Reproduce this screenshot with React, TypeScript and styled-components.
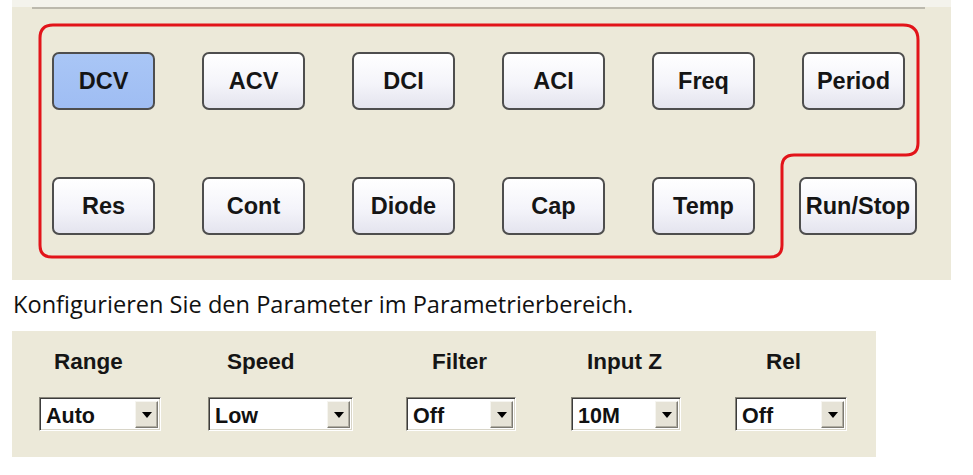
import React from "react";
import styled, { createGlobalStyle } from "styled-components";

const Global = createGlobalStyle`
  html, body { margin: 0; padding: 0; background: #ffffff; }
  body { font-family: "Liberation Sans", Arial, sans-serif; }
`;

const Page = styled.div`
  width: 973px;
  height: 475px;
  display: flex;
  flex-direction: column;
  overflow: hidden;
  background: #ffffff;
`;

const TopPanel = styled.div`
  position: relative;
  margin-left: 12px;
  width: 939px;
  height: 280px;
  background: #ece9d9;
  display: flex;
  flex-direction: column;
`;

const TopStrip = styled.div`
  height: 7px;
  background: #f4f3ec;
`;

const TopRule = styled.div`
  height: 2px;
  margin: 0 26px 0 20px;
  background: #bcb9ad;
`;

const ButtonGrid = styled.div`
  margin-top: 43px;
  padding-left: 40px;
  display: grid;
  grid-template-columns: repeat(6, 103px);
  grid-auto-rows: 58px;
  column-gap: 47px;
  row-gap: 67px;
`;

const ModeButton = styled.button<{ $active?: boolean; $wide?: boolean }>`
  width: ${(p) => (p.$wide ? "118px" : "103px")};
  margin-left: ${(p) => (p.$wide ? "-3px" : "0")};
  height: 58px;
  box-sizing: border-box;
  border: 2px solid #4e4e4e;
  border-radius: 7px;
  background: ${(p) =>
    p.$active
      ? "linear-gradient(#a9c6f6, #9fbdf3)"
      : "linear-gradient(#ffffff 0%, #f4f4fa 55%, #e4e4ee 100%)"};
  font-family: "Liberation Sans", Arial, sans-serif;
  font-weight: bold;
  font-size: 23.5px;
  color: #151515;
  padding: 0;
  display: flex;
  align-items: center;
  justify-content: center;
  cursor: pointer;
`;

const Outline = styled.svg`
  position: absolute;
  left: 0;
  top: 0;
  width: 939px;
  height: 280px;
  pointer-events: none;
`;

const Sentence = styled.p`
  margin: 9px 0 0 13px;
  height: 30px;
  line-height: 30px;
  font-family: "Open Sans", Lato, sans-serif;
  font-size: 23.6px;
  color: #111111;
  white-space: nowrap;
`;

const ParamPanel = styled.div`
  margin: 12px 0 0 12px;
  width: 864px;
  height: 126px;
  box-sizing: border-box;
  padding: 18px 0 0 27px;
  background: #ece9d9;
  display: flex;
  align-items: flex-start;
`;

const ParamGroup = styled.div<{ $left: number }>`
  margin-left: ${(p) => p.$left}px;
  display: flex;
  flex-direction: column;
  align-items: flex-start;
  row-gap: 22px;
`;

const ParamLabel = styled.div<{ $offset: number }>`
  margin-left: ${(p) => p.$offset}px;
  height: 26px;
  line-height: 26px;
  font-family: "Liberation Sans", Arial, sans-serif;
  font-weight: bold;
  font-size: 22.5px;
  color: #151515;
  white-space: nowrap;
`;

const SelectBox = styled.div<{ $w: number }>`
  width: ${(p) => p.$w}px;
  height: 34px;
  box-sizing: border-box;
  border-style: solid;
  border-width: 1px;
  border-color: #8a877c #ffffff #ffffff #8a877c;
  box-shadow: inset 1px 1px 0 #3c3c3c, inset -1px -1px 0 #d8d5c8;
  background: #ffffff;
  display: flex;
  align-items: center;
  padding: 0 2px 0 6px;
`;

const SelectValue = styled.span`
  flex: 1;
  padding-top: 5px;
  font-family: "Liberation Sans", Arial, sans-serif;
  font-weight: bold;
  font-size: 21.5px;
  color: #111111;
  line-height: 1;
`;

const DropButton = styled.div`
  width: 23px;
  height: 27px;
  box-sizing: border-box;
  background: #e6e3d7;
  border-style: solid;
  border-width: 1px;
  border-color: #f6f5f0 #7c7a72 #7c7a72 #f6f5f0;
  box-shadow: inset -1px -1px 0 #b0ada2;
  display: flex;
  align-items: center;
  justify-content: center;
`;

const Triangle = styled.span`
  width: 0;
  height: 0;
  margin-top: 1px;
  border-left: 5px solid transparent;
  border-right: 5px solid transparent;
  border-top: 6px solid #000000;
`;

const modes: { label: string; active?: boolean; wide?: boolean }[] = [
  { label: "DCV", active: true },
  { label: "ACV" },
  { label: "DCI" },
  { label: "ACI" },
  { label: "Freq" },
  { label: "Period" },
  { label: "Res" },
  { label: "Cont" },
  { label: "Diode" },
  { label: "Cap" },
  { label: "Temp" },
  { label: "Run/Stop", wide: true },
];

const params = [
  { label: "Range", value: "Auto", w: 122, left: 0, offset: 15 },
  { label: "Speed", value: "Low", w: 145, left: 47, offset: 19 },
  { label: "Filter", value: "Off", w: 110, left: 53, offset: 26 },
  { label: "Input Z", value: "10M", w: 110, left: 55, offset: 16 },
  { label: "Rel", value: "Off", w: 112, left: 54, offset: 31 },
];

export default function App() {
  return (
    <Page>
      <Global />
      <TopPanel>
        <TopStrip />
        <TopRule />
        <ButtonGrid>
          {modes.map((m) => (
            <ModeButton key={m.label} $active={m.active} $wide={m.wide}>
              {m.label}
            </ModeButton>
          ))}
        </ButtonGrid>
        <Outline viewBox="0 0 939 280">
          <path
            d="M 41 25 H 891 Q 906 25 906 40 V 143 Q 906 155 894 155 H 782 Q 770 155 770 167 V 245 Q 770 257 758 257 H 40 Q 28 257 28 245 V 38 Q 28 25 41 25 Z"
            fill="none"
            stroke="#e2141a"
            strokeWidth="3"
          />
        </Outline>
      </TopPanel>
      <Sentence>Konfigurieren Sie den Parameter im Parametrierbereich.</Sentence>
      <ParamPanel>
        {params.map((p) => (
          <ParamGroup key={p.label} $left={p.left}>
            <ParamLabel $offset={p.offset}>{p.label}</ParamLabel>
            <SelectBox $w={p.w}>
              <SelectValue>{p.value}</SelectValue>
              <DropButton>
                <Triangle />
              </DropButton>
            </SelectBox>
          </ParamGroup>
        ))}
      </ParamPanel>
    </Page>
  );
}
